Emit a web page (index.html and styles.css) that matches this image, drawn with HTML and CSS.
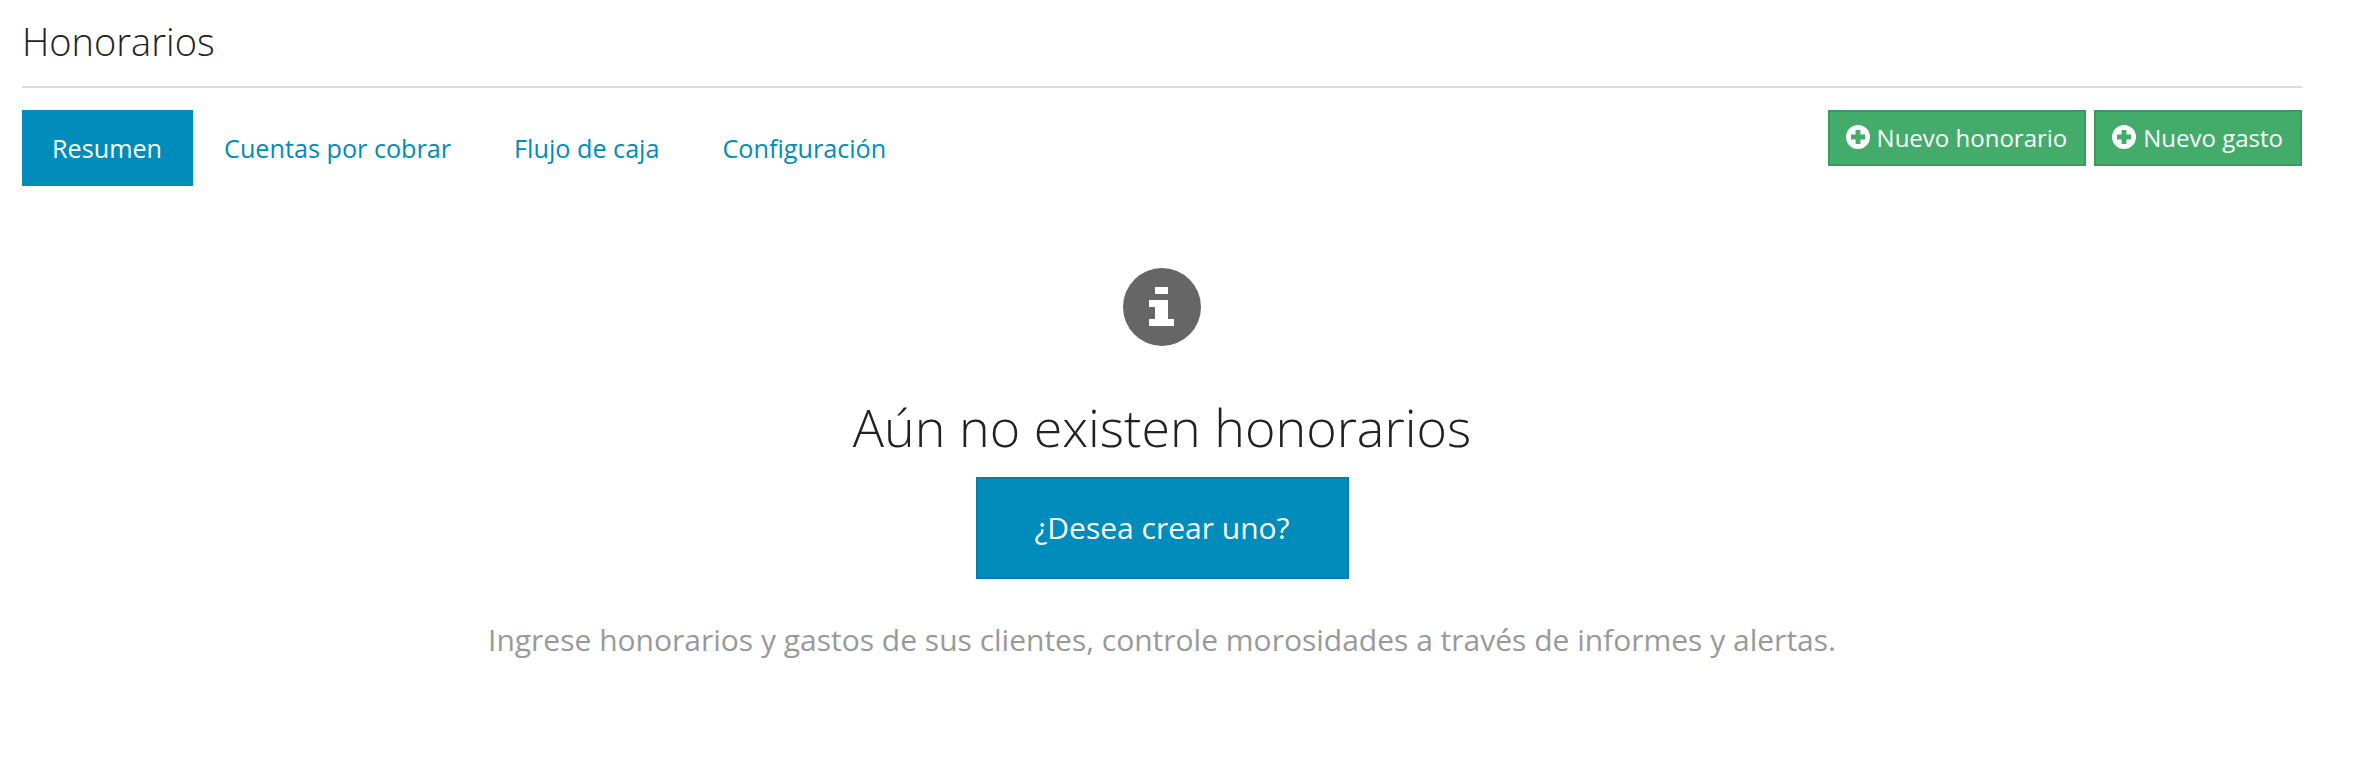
FILE: index.html
```html
<!DOCTYPE html>
<html lang="es">
<head>
    <meta charset="UTF-8">
    <title>Honorarios</title>
    <link rel="stylesheet" href="styles.css">
</head>
<body>
    <div class="container">
        <h1 class="page-title">Honorarios</h1>

        <div class="toolbar">
            <ul class="tabs">
                <li class="tab active"><a href="#">Resumen</a></li>
                <li class="tab"><a href="#">Cuentas por cobrar</a></li>
                <li class="tab"><a href="#">Flujo de caja</a></li>
                <li class="tab"><a href="#">Configuración</a></li>
            </ul>
            <div class="actions">
                <a class="button-green" href="#">
                    <svg class="plus-icon" viewBox="0 0 24 24"><path fill-rule="evenodd" d="M12 0a12 12 0 1 0 0 24a12 12 0 0 0 0-24zM9.6 5h4.8v4.6H19v4.8h-4.6V19H9.6v-4.6H5V9.6h4.6z"/></svg>
                    Nuevo honorario
                </a>
                <a class="button-green" href="#">
                    <svg class="plus-icon" viewBox="0 0 24 24"><path fill-rule="evenodd" d="M12 0a12 12 0 1 0 0 24a12 12 0 0 0 0-24zM9.6 5h4.8v4.6H19v4.8h-4.6V19H9.6v-4.6H5V9.6h4.6z"/></svg>
                    Nuevo gasto
                </a>
            </div>
        </div>

        <div class="empty-state">
            <svg class="info-icon" viewBox="0 0 78 78">
                <path fill-rule="evenodd" d="M39 0a39 39 0 1 0 0 78a39 39 0 0 0 0-78zM32 19h13v7H32zM26 32h19v19h6v7H26v-7h6V39h-6z"/>
            </svg>
            <h2 class="empty-title">Aún no existen honorarios</h2>
            <a class="button-blue" href="#">¿Desea crear uno?</a>
            <p class="empty-text">Ingrese honorarios y gastos de sus clientes, controle morosidades a través de informes y alertas.</p>
        </div>
    </div>
</body>
</html>
```

FILE: styles.css
```css
body {
    font-family: "Open Sans", Arial, sans-serif;
    background-color: #fff;
    color: #222;
    margin: 0;
    padding: 0;
}

a {
    text-decoration: none;
}

.container {
    padding: 0 76px 0 22px;
}

.page-title {
    font-size: 38px;
    font-weight: 300;
    line-height: 50px;
    margin: 0;
    padding: 16px 0 20px;
    border-bottom: 2px solid #ddd;
}

.toolbar {
    display: flex;
    justify-content: space-between;
    align-items: flex-start;
    margin-top: 22px;
}

.tabs {
    display: flex;
    list-style: none;
    margin: 0;
    padding: 0;
}

.tab a {
    display: block;
    padding: 0 31.5px;
    line-height: 76px;
    font-size: 25.2px;
    color: #008cba;
}

.tab.active a {
    background-color: #008cba;
    color: #fff;
    padding: 0 30.5px 0 30px;
}

.actions {
    display: flex;
    gap: 8px;
}

.button-green {
    display: flex;
    align-items: center;
    gap: 7px;
    height: 56px;
    box-sizing: border-box;
    padding: 0 17px 2px 16px;
    background-color: #43ac6a;
    border: 2px solid #3c9a5f;
    color: #fff;
    font-size: 24px;
    font-weight: 500;
}

.plus-icon {
    width: 24px;
    height: 24px;
    fill: #fff;
}

.empty-state {
    display: flex;
    flex-direction: column;
    align-items: center;
    margin-top: 82px;
}

.info-icon {
    width: 78px;
    height: 78px;
    fill: #666;
}

.empty-title {
    font-size: 52px;
    font-weight: 300;
    line-height: 68px;
    margin: 47px 0 0;
}

.button-blue {
    width: 373px;
    box-sizing: border-box;
    margin-top: 16px;
    line-height: 98px;
    text-align: center;
    background-color: #008cba;
    border: 2px solid #007ea8;
    color: #fff;
    font-size: 30px;
    font-weight: 500;
}

.empty-text {
    margin: 41px 0 0;
    font-size: 30px;
    line-height: 40px;
    color: #999;
}
```
